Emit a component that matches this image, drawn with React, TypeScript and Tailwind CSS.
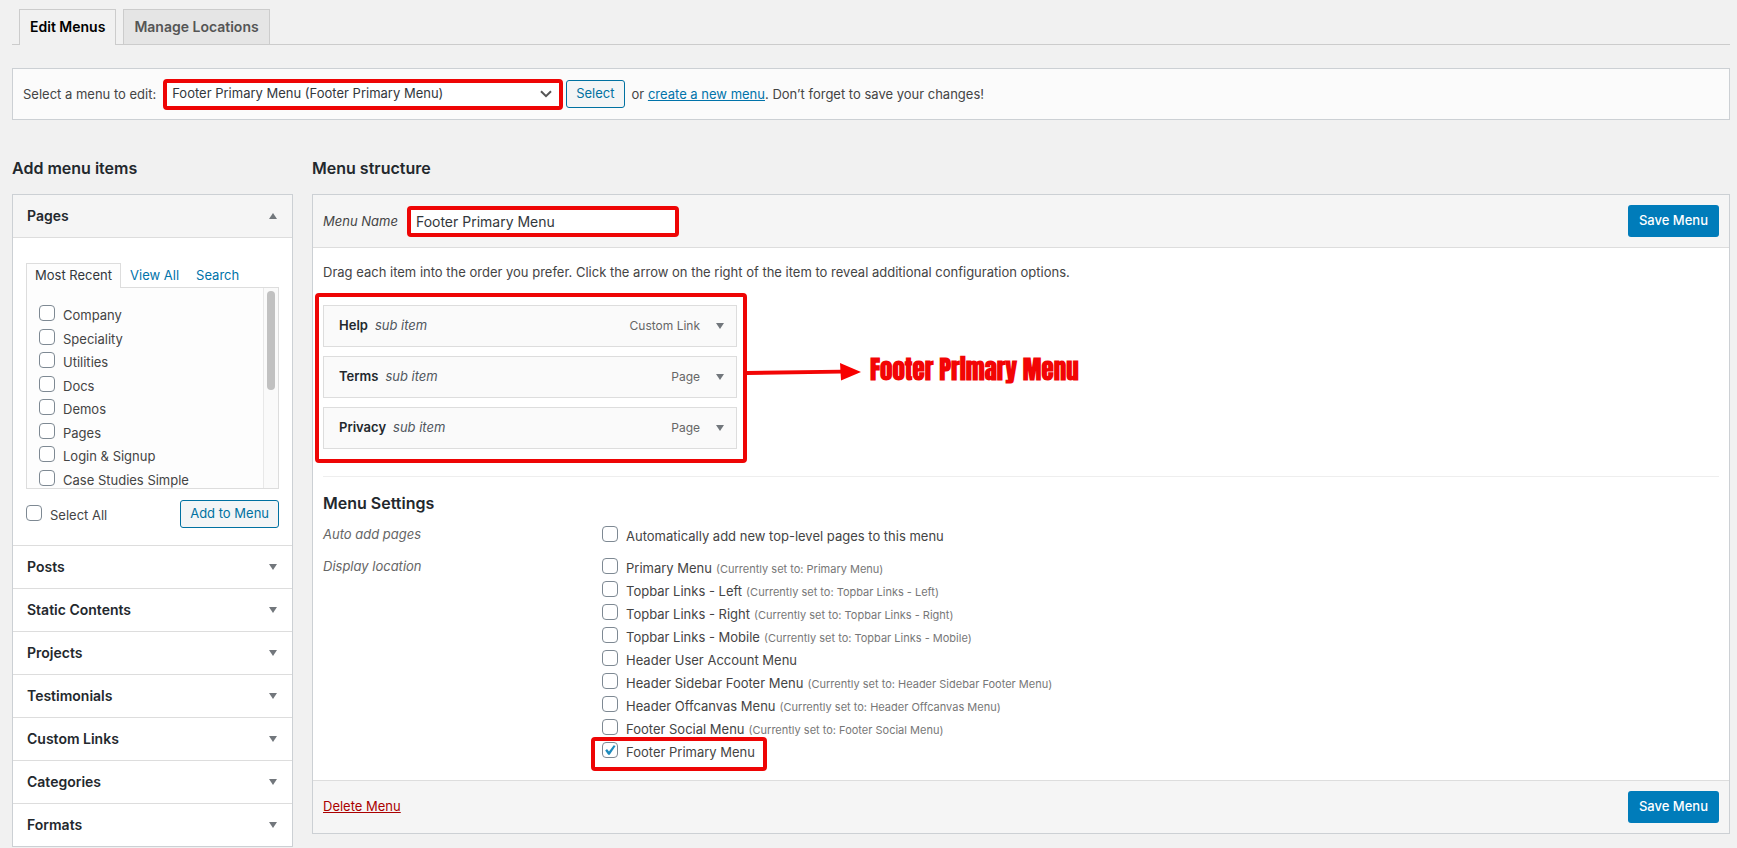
import React, { useState } from 'react';
import clsx from 'clsx';

const pages = [
    'Company',
    'Speciality',
    'Utilities',
    'Docs',
    'Demos',
    'Pages',
    'Login & Signup',
    'Case Studies Simple',
];

const closedSections = [
    'Posts',
    'Static Contents',
    'Projects',
    'Testimonials',
    'Custom Links',
    'Categories',
    'Formats',
];

const menuItems = [
    { title: 'Help', type: 'Custom Link' },
    { title: 'Terms', type: 'Page' },
    { title: 'Privacy', type: 'Page' },
];

const locations = [
    { name: 'Primary Menu', current: 'Primary Menu' },
    { name: 'Topbar Links - Left', current: 'Topbar Links - Left' },
    { name: 'Topbar Links - Right', current: 'Topbar Links - Right' },
    { name: 'Topbar Links - Mobile', current: 'Topbar Links - Mobile' },
    { name: 'Header User Account Menu' },
    { name: 'Header Sidebar Footer Menu', current: 'Header Sidebar Footer Menu' },
    { name: 'Header Offcanvas Menu', current: 'Header Offcanvas Menu' },
    { name: 'Footer Social Menu', current: 'Footer Social Menu' },
];

interface CheckFieldProps {
    children: React.ReactNode;
    defaultChecked?: boolean;
}

/** Checkbox with its label, in the admin style. */
const CheckField: React.FC<CheckFieldProps> = ({ children, defaultChecked }) => (
    <label className="flex h-[18px] items-start gap-2">
        <span className="grid h-4 w-4 shrink-0">
            <input
                type="checkbox"
                defaultChecked={defaultChecked}
                className="peer col-start-1 row-start-1 h-4 w-4 appearance-none rounded border border-[#7e8993] bg-white"
            />
            <svg
                viewBox="0 0 16 16"
                className="pointer-events-none invisible col-start-1 row-start-1 h-4 w-4 peer-checked:visible"
            >
                <path d="M3.2 8.4 5 7.1 7 9.5 11.7 3.2 13.6 4 7.7 12.8 6.2 12.8Z" fill="#1e8cbe" />
            </svg>
        </span>
        <span className="pt-0.5 leading-4 whitespace-nowrap">{children}</span>
    </label>
);

const Triangle: React.FC<{ up?: boolean }> = ({ up }) => (
    <svg viewBox="0 0 8 6" className={clsx('h-1.5 w-2 shrink-0', up && 'rotate-180')} aria-hidden="true">
        <path d="M0 0H8L4 6Z" fill="#72777c" />
    </svg>
);

const SaveButton: React.FC = () => (
    <button
        type="button"
        className="h-8 rounded-[3px] bg-[#007cba] px-[11px] text-[13px] font-medium whitespace-nowrap text-white"
    >
        Save Menu
    </button>
);

const AddItems: React.FC = () => (
    <section className="w-[281px] shrink-0">
        <h2 className="text-base leading-6 font-semibold text-[#23282d]">Add menu items</h2>
        <div className="mt-[14px] border border-[#ccd0d4] bg-white">
            <button
                type="button"
                className="flex h-[43px] w-full items-center justify-between border-b border-[#ddd] bg-[#f5f5f5] pr-[15px] pl-[14px] text-sm font-semibold text-[#23282d]"
            >
                Pages
                <Triangle up />
            </button>
            <div className="px-[13px] pt-[25px] pb-[17px]">
                <div className="relative z-10 -mb-px flex h-[25px] text-[13px] leading-[22px]">
                    <a href="#recent" className="border border-b-0 border-[#ddd] bg-[#fdfdfd] px-2 text-[#32373c]">
                        Most Recent
                    </a>
                    <a href="#all" className="px-[9px] pt-px text-[#0073aa]">
                        View All
                    </a>
                    <a href="#search" className="px-2 pt-px text-[#0073aa]">
                        Search
                    </a>
                </div>
                <div className="flex h-[202px] justify-between overflow-hidden border border-[#ddd] bg-[#fdfdfd]">
                    <ul className="flex h-[200px] flex-col justify-between pt-[17px] pl-3">
                        {pages.map((page) => (
                            <li key={page}>
                                <CheckField>{page}</CheckField>
                            </li>
                        ))}
                    </ul>
                    <div className="w-[15px] border-l border-[#e8e8e8] bg-[#fafafa] px-[3px] pt-[3px]">
                        <div className="h-[99px] w-2 rounded-full bg-[#c1c1c1]" />
                    </div>
                </div>
                <div className="mt-[11px] flex h-7 items-center justify-between">
                    <CheckField>Select All</CheckField>
                    <button
                        type="button"
                        className="h-7 rounded-[3px] border border-[#0071a1] bg-[#f3f5f6] px-[9px] text-[#0071a1]"
                    >
                        Add to Menu
                    </button>
                </div>
            </div>
            {closedSections.map((name) => (
                <button
                    key={name}
                    type="button"
                    className="flex h-[43px] w-full items-center justify-between border-t border-[#ddd] pr-[15px] pl-[14px] text-sm font-semibold text-[#23282d]"
                >
                    {name}
                    <Triangle />
                </button>
            ))}
        </div>
    </section>
);

const MenuStructure: React.FC = () => {
    const [menuName, setMenuName] = useState('Footer Primary Menu');

    return (
        <section className="min-w-0 flex-1">
            <h2 className="text-base leading-6 font-semibold text-[#23282d]">Menu structure</h2>
            <div className="mt-[14px] border border-[#ccd0d4] bg-white">
                <header className="flex h-[53px] items-center justify-between border-b border-[#ddd] bg-[#f5f5f5] px-[10px]">
                    <label className="flex items-center gap-[9px]">
                        <span className="pt-0.5 italic">Menu Name</span>
                        <input
                            type="text"
                            value={menuName}
                            onChange={(e) => setMenuName(e.target.value)}
                            className="h-[31px] w-[272px] rounded-sm border-4 border-[#ee0505] bg-white px-[5px] text-sm text-[#32373c] outline-none"
                        />
                    </label>
                    <SaveButton />
                </header>

                <div className="px-[10px] pt-[14px] pb-[9px]">
                    <p className="leading-5">
                        Drag each item into the order you prefer. Click the arrow on the right of the item to reveal
                        additional configuration options.
                    </p>

                    <div className="mt-[11px] flex items-center">
                        <ul className="-ml-2 flex w-[432px] shrink-0 flex-col gap-[9px] rounded-sm border-4 border-[#ee0505] pt-2 pr-[6px] pb-[10px] pl-1">
                            {menuItems.map((item) => (
                                <li
                                    key={item.title}
                                    className="flex h-[42px] items-center border border-[#ddd] bg-[#fafafa] pr-3 pl-[15px]"
                                >
                                    <span className="font-semibold text-[#23282d]">{item.title}</span>
                                    <span className="ml-[7px] italic text-[#50575e]">sub item</span>
                                    <span className="ml-auto text-xs text-[#666]">{item.type}</span>
                                    <button type="button" aria-label={`Edit ${item.title}`} className="ml-4">
                                        <Triangle />
                                    </button>
                                </li>
                            ))}
                        </ul>
                        <div className="flex items-center pb-3">
                            <svg viewBox="0 0 114 18" className="h-[18px] w-[114px] shrink-0" aria-hidden="true">
                                <path d="M0 8 94 6.8V10.6L0 12Z" fill="#f20505" />
                                <path d="M93 0 114 9 94 17.5Z" fill="#f80000" />
                            </svg>
                            <strong className="ml-[9px] pb-1 font-['Anton','Impact','Liberation_Sans_Narrow',sans-serif] text-[25px] leading-8 font-black whitespace-nowrap text-[#f20505]">
                                Footer Primary Menu
                            </strong>
                        </div>
                    </div>

                    <div className="mt-[13px] border-t border-[#eee] pt-[14px]">
                        <h3 className="text-base leading-6 font-semibold text-[#23282d]">Menu Settings</h3>
                        <div className="mt-[11px] flex">
                            <span className="w-[279px] shrink-0 leading-4 italic text-[#666]">Auto add pages</span>
                            <CheckField>Automatically add new top-level pages to this menu</CheckField>
                        </div>
                        <div className="mt-[14px] flex">
                            <span className="w-[279px] shrink-0 leading-4 italic text-[#666]">Display location</span>
                            <div>
                                <ul className="flex flex-col gap-[5px]">
                                    {locations.map((loc) => (
                                        <li key={loc.name}>
                                            <CheckField>
                                                {loc.name}
                                                {loc.current && (
                                                    <span className="ml-1 text-[11px] leading-3 text-[#777]">
                                                        (Currently set to: {loc.current})
                                                    </span>
                                                )}
                                            </CheckField>
                                        </li>
                                    ))}
                                </ul>
                                <div className="-ml-[11px] flex h-[34px] w-[176px] items-start rounded-sm border-4 border-[#ee0505] pt-px pl-[7px]">
                                    <CheckField defaultChecked>Footer Primary Menu</CheckField>
                                </div>
                            </div>
                        </div>
                    </div>
                </div>

                <footer className="flex h-[53px] items-center justify-between border-t border-[#ddd] bg-[#f5f5f5] px-[10px]">
                    <a href="#delete" className="text-[#a00] underline">
                        Delete Menu
                    </a>
                    <SaveButton />
                </footer>
            </div>
        </section>
    );
};

const App: React.FC = () => (
    <div className="h-screen overflow-hidden bg-[#f1f1f1] pr-[7px] pl-3 font-['Inter','Liberation_Sans',sans-serif] text-[13px] text-[#444]">
        <nav className="flex h-[45px] items-end gap-[7px] border-b border-[#ccc] pt-[9px] pl-[7px] text-sm font-semibold">
            <a
                href="#edit"
                className="-mb-px h-9 border border-b-0 border-[#ccc] bg-[#f1f1f1] px-[10px] pt-[5px] leading-6 text-black"
            >
                Edit Menus
            </a>
            <a
                href="#locations"
                className="h-[35px] border border-b-0 border-[#ccc] bg-[#e5e5e5] px-[10px] pt-[5px] leading-6 text-[#555]"
            >
                Manage Locations
            </a>
        </nav>

        <form
            className="mt-[23px] flex h-[52px] items-center border border-[#ccd0d4] bg-[#fbfbfb] px-[10px]"
            onSubmit={(e) => e.preventDefault()}
        >
            <label htmlFor="menu" className="pt-0.5">
                Select a menu to edit:
            </label>
            <div className="ml-[7px] grid w-[400px] items-center">
                <select
                    id="menu"
                    className="col-start-1 row-start-1 h-[31px] w-full appearance-none rounded-sm border-4 border-[#ee0505] bg-white pl-[5px] text-[13px] text-[#32373c] outline-none"
                >
                    <option>Footer Primary Menu (Footer Primary Menu)</option>
                </select>
                <svg
                    viewBox="0 0 12 8"
                    className="pointer-events-none col-start-1 row-start-1 mr-[11px] h-2 w-3 justify-self-end"
                    aria-hidden="true"
                >
                    <path d="M1 1.2 6 6.2 11 1.2" fill="none" stroke="#555" strokeWidth="2" />
                </svg>
            </div>
            <button
                type="submit"
                className="ml-[3px] h-7 rounded-[3px] border border-[#0071a1] bg-[#f3f5f6] px-[9px] text-[#0071a1]"
            >
                Select
            </button>
            <span className="ml-[7px] pt-0.5">
                or{' '}
                <a href="#create" className="text-[#0073aa] underline">
                    create a new menu
                </a>
                . Don’t forget to save your changes!
            </span>
        </form>

        <div className="mt-9 flex gap-[19px]">
            <AddItems />
            <MenuStructure />
        </div>
    </div>
);

export default App;
